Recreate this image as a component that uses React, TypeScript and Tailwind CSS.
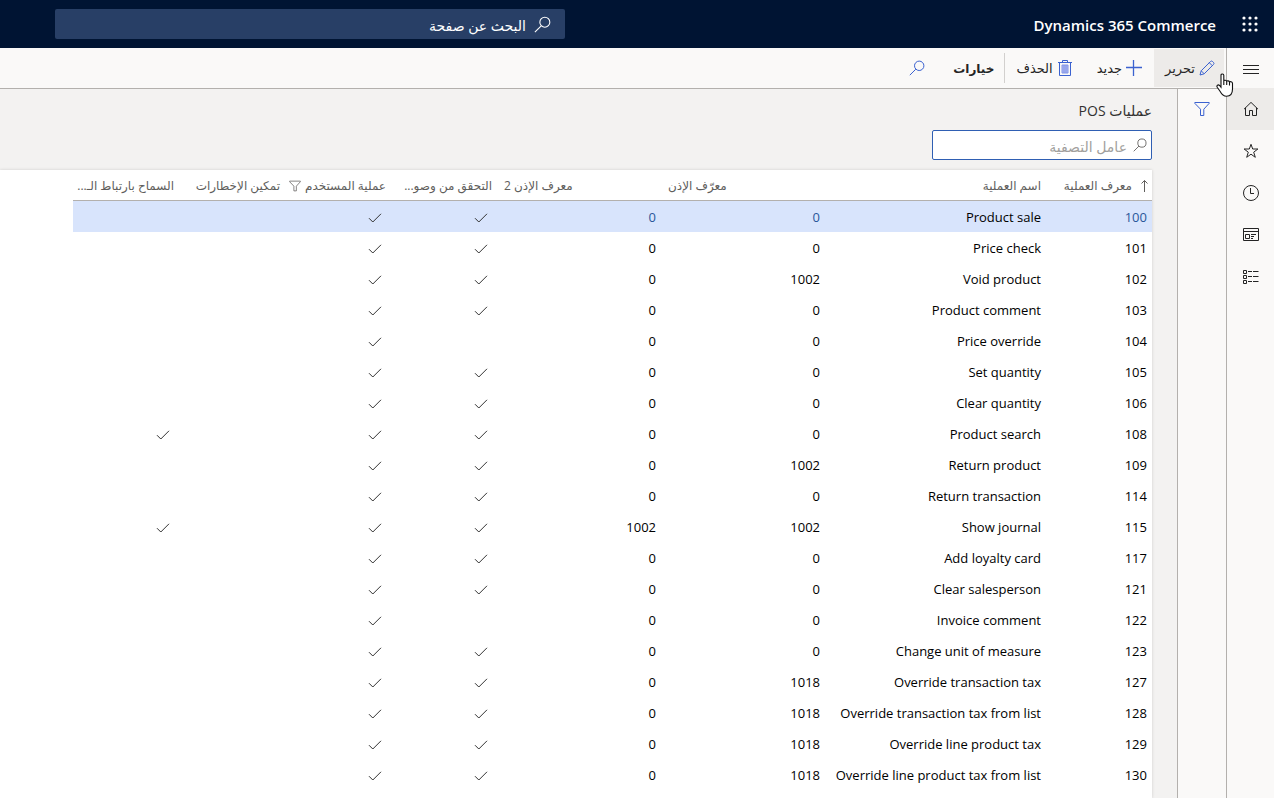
import type { ReactNode } from 'react';

type Operation = {
  id: number;
  name: string;
  permission: number;
  permission2: number;
  checkAccess: boolean;
  userOperation: boolean;
  notifications: boolean;
  linking: boolean;
};

const op = (
  id: number,
  name: string,
  permission = 0,
  checkAccess = true,
  permission2 = 0,
  linking = false,
): Operation => ({
  id,
  name,
  permission,
  permission2,
  checkAccess,
  userOperation: true,
  notifications: false,
  linking,
});

const operations: Operation[] = [
  op(100, 'Product sale'),
  op(101, 'Price check'),
  op(102, 'Void product', 1002),
  op(103, 'Product comment'),
  op(104, 'Price override', 0, false),
  op(105, 'Set quantity'),
  op(106, 'Clear quantity'),
  op(108, 'Product search', 0, true, 0, true),
  op(109, 'Return product', 1002),
  op(114, 'Return transaction'),
  op(115, 'Show journal', 1002, true, 1002, true),
  op(117, 'Add loyalty card'),
  op(121, 'Clear salesperson'),
  op(122, 'Invoice comment', 0, false),
  op(123, 'Change unit of measure'),
  op(127, 'Override transaction tax', 1018),
  op(128, 'Override transaction tax from list', 1018),
  op(129, 'Override line product tax', 1018),
  op(130, 'Override line product tax from list', 1018),
];

function Svg({ className, children }: { className: string; children: ReactNode }) {
  return (
    <svg viewBox="0 0 16 16" fill="none" stroke="currentColor" strokeWidth="1" aria-hidden="true" className={className}>
      {children}
    </svg>
  );
}

function SearchIcon({ className }: { className: string }) {
  return (
    <Svg className={className}>
      <circle cx="10.2" cy="5.8" r="4.7" />
      <path d="M6.8 9.2 L0.8 15.2" />
    </Svg>
  );
}

function FilterIcon({ className }: { className: string }) {
  return (
    <Svg className={className}>
      <path d="M0.8 1.5 H15.2 V2.3 L9.8 8.2 V14.5 H6.5 V8.2 L0.8 2.3 Z" />
    </Svg>
  );
}

function CheckMark() {
  return (
    <svg viewBox="0 0 14 10" fill="none" stroke="#333" strokeWidth="1" className="h-[10px] w-[14px]" aria-hidden="true">
      <path d="M1 5.2 L4.8 9 L13 0.8" />
    </svg>
  );
}

function Waffle() {
  const steps = [2, 8, 14];
  return (
    <svg viewBox="0 0 16 16" fill="#fff" className="size-4" aria-hidden="true">
      {steps.map((y) => steps.map((x) => <circle key={`${x}-${y}`} cx={x} cy={y} r="1.6" />))}
    </svg>
  );
}

function RailButton({ label, active, children }: { label: string; active?: boolean; children: ReactNode }) {
  return (
    <button
      type="button"
      aria-label={label}
      className={`flex h-[42px] w-full items-center justify-center text-[#242424] ${active ? 'bg-[#edebe9]' : ''}`}
    >
      {children}
    </button>
  );
}

function Rail() {
  return (
    <nav className="flex w-12 shrink-0 flex-col border-l border-[#b3b0ad] bg-[#faf9f8]">
      <button type="button" aria-label="القائمة" className="flex h-10 w-full items-center justify-center pt-1 text-[#242424]">
        <Svg className="size-4">
          <path d="M0 3.5 H16 M0 7.5 H16 M0 11.5 H16" />
        </Svg>
      </button>
      <RailButton label="الصفحة الرئيسية" active>
        <Svg className="size-4">
          <path d="M1 8.2 L8 1.4 L15 8.2 M2.5 6.8 V14.5 H6.5 V9.5 H9.5 V14.5 H13.5 V6.8" />
        </Svg>
      </RailButton>
      <RailButton label="المفضلة">
        <Svg className="size-4">
          <path d="M8 1.3 L9.7 6 H14.9 L10.7 9.2 L12.3 14.3 L8 11.2 L3.7 14.3 L5.3 9.2 L1.1 6 H6.3 Z" />
        </Svg>
      </RailButton>
      <RailButton label="الأخيرة">
        <Svg className="size-4">
          <circle cx="8" cy="8" r="7.5" />
          <path d="M7.5 3 V8.5 H11" />
        </Svg>
      </RailButton>
      <RailButton label="مساحات العمل">
        <Svg className="size-4">
          <path d="M0.5 1.5 H15.5 V13.5 H0.5 Z M0.5 4.5 H15.5 M2.5 7.5 H6.5 V11.5 H2.5 Z M8 7.5 H13 M8 9.5 H11 M8 11.5 H10" />
        </Svg>
      </RailButton>
      <RailButton label="الوحدات">
        <Svg className="size-4">
          <path d="M0.5 1.5 H3.5 V4.5 H0.5 Z M0.5 6.5 H3.5 V9.5 H0.5 Z M0.5 11.5 H3.5 V14.5 H0.5 Z M5 2.5 H9 M10 2.5 H15.5 M5 7.5 H9 M10 7.5 H15.5 M5 12.5 H9 M10 12.5 H15.5" />
        </Svg>
      </RailButton>
    </nav>
  );
}

function Toolbar() {
  return (
    <div className="flex h-[41px] shrink-0 items-center border-b border-[#b3b0ad] bg-[#faf9f8] pr-0.5 text-[13px] text-[#242424]">
      <button type="button" className="flex h-[38px] w-[70px] items-center gap-1 bg-[#edebe9] pr-[9px]">
        <Svg className="size-4 text-[#3b62d0]">
          <path d="M1 15 L2.2 10.8 L11.4 1.6 A1.6 1.6 0 0 1 13.7 1.6 L14.4 2.3 A1.6 1.6 0 0 1 14.4 4.6 L5.2 13.8 Z M10.3 2.7 L13.3 5.7 M2.2 10.8 L5.2 13.8" />
        </Svg>
        <span className="pt-0.5">تحرير</span>
      </button>
      <button type="button" className="mr-3 flex h-[38px] items-center gap-1">
        <svg viewBox="0 0 16 16" className="size-4" fill="none" stroke="#3b62d0" strokeWidth="1.3" aria-hidden="true">
          <path d="M0 7.5 H16 M7.5 0 V16" />
        </svg>
        <span className="pt-0.5">جديد</span>
      </button>
      <button type="button" className="mr-6 flex h-[38px] items-center gap-1">
        <Svg className="size-4 text-[#3b62d0]">
          <path d="M1 2.5 H15 M5.5 2.5 V0.5 H10.5 V2.5 M2.5 2.5 V15.5 H13.5 V2.5" />
          <path d="M5 5 H11 V13 H5 Z" fill="#aeb9f3" stroke="#8295e6" />
          <path d="M7 5 V13 M9 5 V13" stroke="#8295e6" />
        </Svg>
        <span className="pt-0.5">الحذف</span>
      </button>
      <span className="mr-[11px] h-[30px] w-px bg-[#d2d0ce]" />
      <button type="button" className="mr-2.5 h-[38px] pt-0.5 text-[12px] font-bold">
        خيارات
      </button>
      <button type="button" aria-label="بحث" className="mr-7 flex h-[38px] items-center">
        <SearchIcon className="size-4 text-[#3b62d0]" />
      </button>
    </div>
  );
}

const head = 'border-b border-[#b3b0ad] pt-0.5 px-1.5 font-normal whitespace-nowrap';

function OperationsTable() {
  return (
    <table className="w-[1079px] table-fixed border-separate border-spacing-0 text-[13px]">
      <colgroup>
        <col className="w-[105px]" />
        <col className="w-[221px]" />
        <col className="w-[164px]" />
        <col className="w-[164px]" />
        <col className="w-[106px]" />
        <col className="w-[106px]" />
        <col className="w-[106px]" />
        <col className="w-[107px]" />
      </colgroup>
      <thead>
        <tr className="h-[31px] text-[12px] text-[#605e5c]">
          <th scope="col" className="border-b border-[#b3b0ad] pt-0.5 pr-0.5 font-normal">
            <span className="flex items-center gap-2 whitespace-nowrap">
              <svg viewBox="0 0 10 14" fill="none" stroke="currentColor" className="h-3.5 w-2.5" aria-hidden="true">
                <path d="M4.5 13 V1.5 M1.5 4.5 L4.5 1.5 L7.5 4.5" />
              </svg>
              معرف العملية
            </span>
          </th>
          <th scope="col" className={`${head} text-right`}>اسم العملية</th>
          <th scope="col" className={`${head} text-left`}>معرّف الإذن</th>
          <th scope="col" className={`${head} text-left`}>معرف الإذن 2</th>
          <th scope="col" className={`${head} text-right`}>التحقق من وصو...</th>
          <th scope="col" className="border-b border-[#b3b0ad] pt-0.5 pr-1.5 font-normal">
            <span className="flex items-center gap-1 whitespace-nowrap">
              عملية المستخدم
              <FilterIcon className="size-3 shrink-0" />
            </span>
          </th>
          <th scope="col" className={`${head} text-right`}>تمكين الإخطارات</th>
          <th scope="col" className={`${head} text-right`}>السماح بارتباط الـ...</th>
        </tr>
      </thead>
      <tbody>
        {operations.map((row, i) => {
          const selected = i === 0;
          const num = selected ? 'text-[#2b579a]' : 'text-black';
          return (
            <tr key={row.id} className={`h-[31px] ${selected ? 'bg-[#d8e4fc]' : ''}`}>
              <td className={`pt-0.5 pr-[5px] ${num}`}>{row.id}</td>
              <td dir="ltr" className="pt-0.5 pr-1.5 text-right whitespace-nowrap text-black">{row.name}</td>
              <td className={`pt-0.5 pr-1.5 ${num}`}>{row.permission}</td>
              <td className={`pt-0.5 pr-1.5 ${num}`}>{row.permission2}</td>
              {[row.checkAccess, row.userOperation, row.notifications, row.linking].map((on, c) => (
                <td key={c} className="pt-0.5 pr-2.5">{on && <CheckMark />}</td>
              ))}
            </tr>
          );
        })}
      </tbody>
    </table>
  );
}

function Pointer() {
  return (
    <svg viewBox="0 0 18 24" className="pointer-events-none absolute top-[73px] right-[44px] h-6 w-[18px]" aria-hidden="true">
      <path
        d="M5 2.2 C5 0.6 7.8 0.6 7.8 2.2 V8 C8 6.8 10.6 6.9 10.7 8.5 C11 7.4 13.4 7.6 13.5 9.2 C13.9 8.2 16.5 8.4 16.5 10.5 V16 C16.5 21 14 23.2 10.5 23.2 C6.8 23.2 5.5 21 4.2 18.5 L1.2 14.2 C0.2 12.4 2.2 11.2 3.5 12.5 L5 14.2 Z M7.8 8 V12 M10.7 8.5 V12 M13.5 9.2 V12.4"
        fill="#fff"
        stroke="#111"
        strokeWidth="1.1"
      />
    </svg>
  );
}

export default function App() {
  return (
    <div
      dir="rtl"
      className="relative flex h-screen flex-col overflow-hidden bg-white pr-1 font-['Open_Sans','DejaVu_Sans',sans-serif]"
    >
      <header className="flex h-12 shrink-0 items-center bg-[#001433] pr-4 text-white">
        <button type="button" aria-label="التطبيقات">
          <Waffle />
        </button>
        <span dir="ltr" className="mr-[26px] pt-0.5 text-[15px] font-semibold whitespace-nowrap">Dynamics 365 Commerce</span>
        <label className="mr-auto ml-[55px] flex h-[30px] w-[510px] items-center gap-2 rounded-xs bg-[#283f66] pr-3.5">
          <SearchIcon className="size-[17px] shrink-0" />
          <input
            type="text"
            aria-label="البحث عن صفحة"
            placeholder="البحث عن صفحة"
            className="min-w-0 flex-1 bg-transparent pt-0.5 text-[14px] outline-none placeholder:text-white"
          />
        </label>
      </header>
      <div className="flex min-h-0 flex-1">
        <Rail />
        <div className="flex min-w-0 flex-1 flex-col">
          <Toolbar />
          <div className="flex min-h-0 flex-1">
            <aside className="flex w-[49px] shrink-0 flex-col items-center border-l border-[#b3b0ad] bg-[#faf9f8] pt-3">
              <button type="button" aria-label="عوامل التصفية">
                <FilterIcon className="size-4 text-[#3b62d0]" />
              </button>
            </aside>
            <main className="flex min-w-0 flex-1 flex-col bg-[#f3f2f1] pr-[25px]">
              <h1 className="mt-3 h-5 text-[14px] leading-5 text-[#323130]">عمليات POS</h1>
              <label className="mt-[9px] mb-2.5 flex h-[30px] w-[220px] shrink-0 items-center gap-1.5 rounded-xs border border-[#2f5fb3] bg-white pr-1 text-[#605e5c]">
                <SearchIcon className="size-3.5 shrink-0" />
                <input
                  type="text"
                  aria-label="عامل التصفية"
                  placeholder="عامل التصفية"
                  className="min-w-0 flex-1 bg-transparent pt-0.5 text-[14px] outline-none placeholder:text-[#a19f9d]"
                />
              </label>
              <section className="min-h-0 flex-1 overflow-hidden bg-white shadow-[0_0_3px_rgba(0,0,0,0.15)]">
                <OperationsTable />
              </section>
            </main>
          </div>
        </div>
      </div>
      <Pointer />
    </div>
  );
}
